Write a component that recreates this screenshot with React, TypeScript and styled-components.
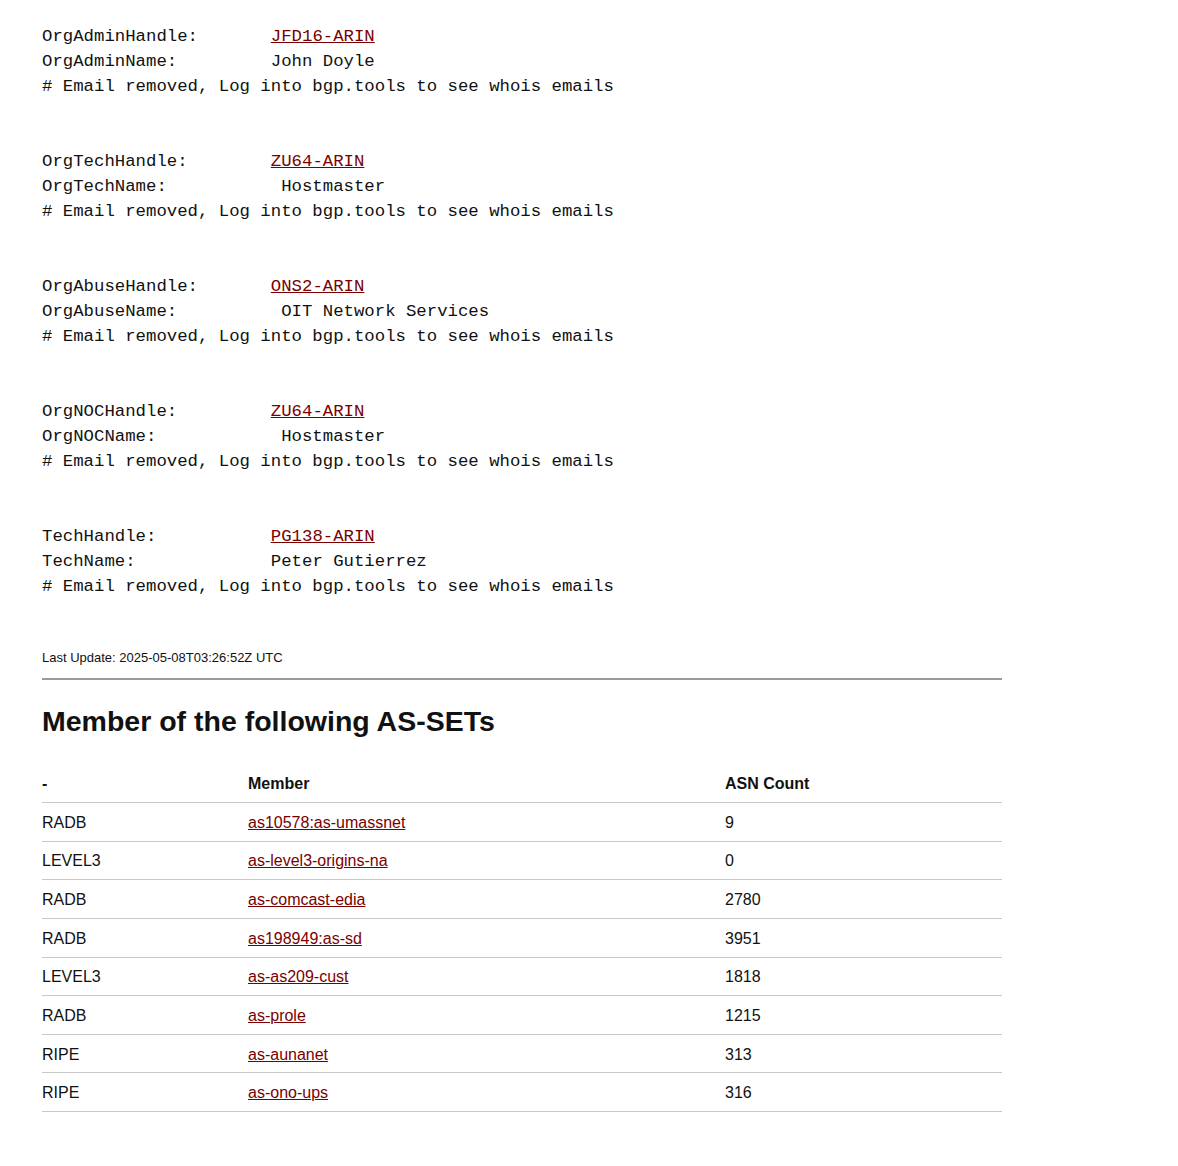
import React from "react";
import styled, { createGlobalStyle } from "styled-components";

const Global = createGlobalStyle`
  html, body { margin: 0; padding: 0; background: #fff; }
  body { font-family: "Liberation Sans", Arial, sans-serif; color: #111; }
`;

const Page = styled.div`
  width: 960px;
  padding: 24px 0 40px 42px;
`;

const Whois = styled.pre`
  margin: 0;
  font-family: "Liberation Mono", "DejaVu Sans Mono", monospace;
  font-size: 17.33px;
  line-height: 25px;
  color: #111;
  white-space: pre;
`;

const Link = styled.a`
  color: #7a0000;
  text-decoration: underline;
`;

const Updated = styled.div`
  margin-top: 50px;
  font-size: 13px;
  line-height: 18px;
  color: #111;
`;

const Rule = styled.hr`
  margin: 11px 0 0 0;
  border: 0;
  border-top: 2px solid #9a9a9a;
  height: 0;
`;

const Heading = styled.h2`
  margin: 24px 0 0 0;
  font-size: 28.5px;
  line-height: 34px;
  font-weight: bold;
  color: #111;
`;

const Table = styled.table`
  margin-top: 36px;
  width: 960px;
  border-collapse: collapse;
  font-size: 16px;
`;

const Th = styled.th`
  text-align: left;
  font-weight: bold;
  padding: 0 0 8px 0;
  line-height: 20px;
  border-bottom: 1px solid #c8c8c8;
`;

const Td = styled.td`
  text-align: left;
  padding: 2px 0 0 0;
  height: 35.625px;
  line-height: 20px;
  border-bottom: 1px solid #c8c8c8;
  vertical-align: middle;
`;

type Block = { k1: string; h: string; k2: string; v: string };

const blocks: Block[] = [
  { k1: "OrgAdminHandle:       ", h: "JFD16-ARIN", k2: "OrgAdminName:         ", v: "John Doyle" },
  { k1: "OrgTechHandle:        ", h: "ZU64-ARIN", k2: "OrgTechName:           ", v: "Hostmaster" },
  { k1: "OrgAbuseHandle:       ", h: "ONS2-ARIN", k2: "OrgAbuseName:          ", v: "OIT Network Services" },
  { k1: "OrgNOCHandle:         ", h: "ZU64-ARIN", k2: "OrgNOCName:            ", v: "Hostmaster" },
  { k1: "TechHandle:           ", h: "PG138-ARIN", k2: "TechName:             ", v: "Peter Gutierrez" },
];

const rows: [string, string, string][] = [
  ["RADB", "as10578:as-umassnet", "9"],
  ["LEVEL3", "as-level3-origins-na", "0"],
  ["RADB", "as-comcast-edia", "2780"],
  ["RADB", "as198949:as-sd", "3951"],
  ["LEVEL3", "as-as209-cust", "1818"],
  ["RADB", "as-prole", "1215"],
  ["RIPE", "as-aunanet", "313"],
  ["RIPE", "as-ono-ups", "316"],
];

export default function App() {
  return (
    <>
      <Global />
      <Page>
        <Whois>
          {blocks.map((b, i) => (
            <React.Fragment key={i}>
              {i > 0 ? "\n\n\n" : ""}
              {b.k1}
              <Link href="#">{b.h}</Link>
              {"\n"}
              {b.k2}
              {b.v}
              {"\n# Email removed, Log into bgp.tools to see whois emails"}
            </React.Fragment>
          ))}
        </Whois>
        <Updated>Last Update: 2025-05-08T03:26:52Z UTC</Updated>
        <Rule />
        <Heading>Member of the following AS-SETs</Heading>
        <Table>
          <colgroup>
            <col style={{ width: 206 }} />
            <col style={{ width: 477 }} />
            <col />
          </colgroup>
          <thead>
            <tr>
              <Th>-</Th>
              <Th>Member</Th>
              <Th>ASN Count</Th>
            </tr>
          </thead>
          <tbody>
            {rows.map((r, i) => (
              <tr key={i}>
                <Td>{r[0]}</Td>
                <Td>
                  <Link href="#">{r[1]}</Link>
                </Td>
                <Td>{r[2]}</Td>
              </tr>
            ))}
          </tbody>
        </Table>
      </Page>
    </>
  );
}
